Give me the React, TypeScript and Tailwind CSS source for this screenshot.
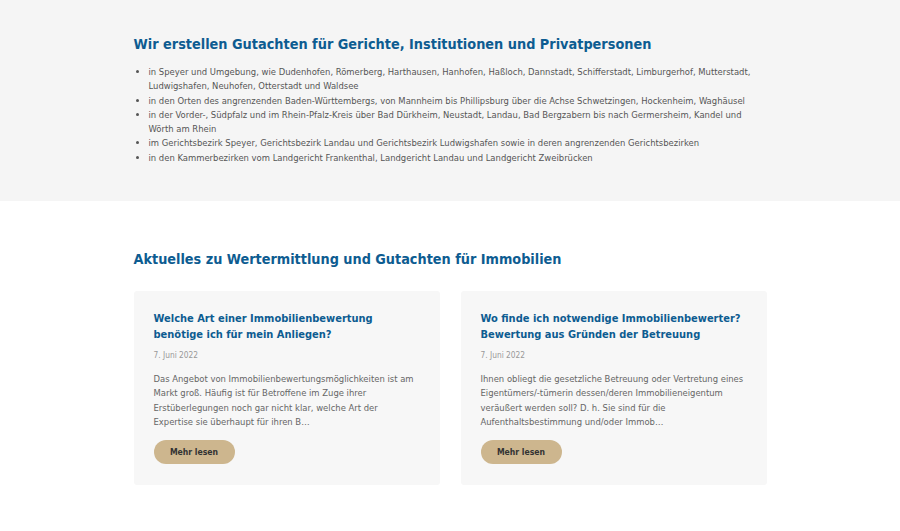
const places = [
  'in Speyer und Umgebung, wie Dudenhofen, Römerberg, Harthausen, Hanhofen, Haßloch, Dannstadt, Schifferstadt, Limburgerhof, Mutterstadt, Ludwigshafen, Neuhofen, Otterstadt und Waldsee',
  'in den Orten des angrenzenden Baden-Württembergs, von Mannheim bis Phillipsburg über die Achse Schwetzingen, Hockenheim, Waghäusel',
  'in der Vorder-, Südpfalz und im Rhein-Pfalz-Kreis über Bad Dürkheim, Neustadt, Landau, Bad Bergzabern bis nach Germersheim, Kandel und Wörth am Rhein',
  'im Gerichtsbezirk Speyer, Gerichtsbezirk Landau und Gerichtsbezirk Ludwigshafen sowie in deren angrenzenden Gerichtsbezirken',
  'in den Kammerbezirken vom Landgericht Frankenthal, Landgericht Landau und Landgericht Zweibrücken',
]

const posts = [
  {
    title: 'Welche Art einer Immobilienbewertung benötige ich für mein Anliegen?',
    date: '7. Juni 2022',
    excerpt:
      'Das Angebot von Immobilienbewertungsmöglichkeiten ist am Markt groß. Häufig ist für Betroffene im Zuge ihrer Erstüberlegungen noch gar nicht klar, welche Art der Expertise sie überhaupt für ihren B…',
  },
  {
    title: 'Wo finde ich notwendige Immobilienbewerter? Bewertung aus Gründen der Betreuung',
    date: '7. Juni 2022',
    excerpt:
      'Ihnen obliegt die gesetzliche Betreuung oder Vertretung eines Eigentümers/-tümerin dessen/deren Immobilieneigentum veräußert werden soll? D. h. Sie sind für die Aufenthaltsbestimmung und/oder Immob…',
  },
]

export default function App() {
  return (
    <div className="min-h-[531px] bg-white font-['DejaVu_Sans_Condensed','DejaVu_Sans',sans-serif]">
      <section className="bg-[#f5f5f5] pt-[34px] pb-[36px]">
        <div className="mx-auto w-[633px]">
          <h2 className="text-[14.35px] font-bold leading-[20px] text-[#0d5c91]">
            Wir erstellen Gutachten für Gerichte, Institutionen und Privatpersonen
          </h2>
          <ul className="mt-[11px] list-disc pl-[15px] text-[9.4px] leading-[14.3px] text-[#555] marker:text-[#555]">
            {places.map((p) => (
              <li key={p}>{p}</li>
            ))}
          </ul>
        </div>
      </section>

      <section className="pt-[48px] pb-[46px]">
        <div className="mx-auto w-[633px]">
          <h2 className="text-[14.3px] font-bold leading-[20px] text-[#0d5c91]">
            Aktuelles zu Wertermittlung und Gutachten für Immobilien
          </h2>
          <div className="mt-[22px] grid grid-cols-2 gap-[21px]">
            {posts.map((p) => (
              <article key={p.title} className="rounded-[3px] bg-[#f7f7f7] px-[20px] pt-[20px] pb-[21px]">
                <h3 className="text-[11px] font-bold leading-[16px] text-[#0d5c91]">{p.title}</h3>
                <p className="mt-[6px] text-[8.3px] leading-[12px] text-[#999]">{p.date}</p>
                <p className="mt-[11px] text-[9.4px] leading-[14.3px] text-[#666]">{p.excerpt}</p>
                <button className="mt-[11px] h-[24px] w-[81px] rounded-full bg-[#cdb68e] text-[8.6px] font-bold text-[#333]">
                  Mehr lesen
                </button>
              </article>
            ))}
          </div>
        </div>
      </section>
    </div>
  )
}
